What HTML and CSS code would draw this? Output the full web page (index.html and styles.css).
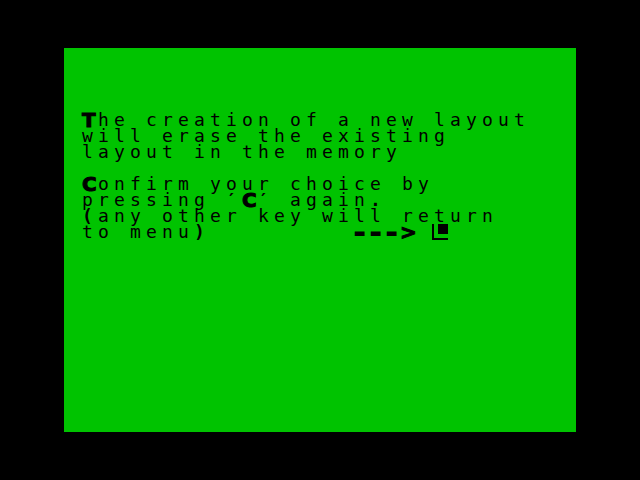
FILE: index.html
```html
<!DOCTYPE html>
<html lang="en">
<head>
<meta charset="utf-8">
<title>New layout</title>
<link rel="stylesheet" href="styles.css">
</head>
<body>
<main class="screen">
<section class="message">
<p class="line">The creation of a new layout</p>
<p class="line">will erase the existing</p>
<p class="line">layout in the memory</p>
</section>
<section class="message">
<p class="line">Confirm your choice by</p>
<p class="line">pressing ′C′ again.</p>
<p class="line">(any other key will return</p>
<p class="line">to menu)         ---&gt; <svg class="cursor" viewBox="0 0 16 16" shape-rendering="crispEdges" aria-hidden="true"><path d="M0 0H2V14H16V16H0ZM6 0H16V10H6Z"/></svg></p>
</section>
</main>
<script src="cells.js"></script>
</body>
</html>
```
FILE: styles.css
```css
* {
  box-sizing: border-box;
}

body {
  margin: 0;
  min-height: 100vh;
  padding: 10vh 10vw;
  display: flex;
  background: #000;
  color: #000;
  font-family: "DejaVu Sans Mono", monospace;
  font-size: 18px;
  line-height: 16px;
}

.screen {
  flex: 1;
  display: flex;
  flex-direction: column;
  gap: 16px;
  padding: 64px 16px;
  background: #00c300;
}

.line {
  margin: 0;
  display: flex;
  height: 16px;
  white-space: pre;
}

/* One character cell of the display */
.cell {
  flex: none;
  width: 16px;
  padding-left: 2px;
}

.capital {
  font-family: "DejaVu Sans", sans-serif;
  font-size: 20px;
  font-weight: bold;
  -webkit-text-stroke: 1px #000;
}

.bold {
  font-weight: bold;
}

.arrow {
  padding-left: 0;
  font-family: "DejaVu Sans", sans-serif;
  font-size: 20px;
  font-weight: bold;
  -webkit-text-stroke: 1px #000;
}

.dash {
  padding-left: 1px;
  font-family: "DejaVu Sans", sans-serif;
  font-size: 32px;
  font-weight: bold;
}

.quote {
  font-weight: bold;
}

.cursor {
  flex: none;
  width: 16px;
  height: 16px;
}
```
FILE: cells.js
```js
// Places every character of a line in its own display cell.
function cellClass(ch) {
  if (/[A-Z]/.test(ch)) return "cell capital";
  if (ch === "-") return "cell dash";
  if (ch === ">") return "cell arrow";
  if (ch === "′") return "cell quote";
  if (/[().]/.test(ch)) return "cell bold";
  return "cell";
}

document.querySelectorAll(".line").forEach(function (line) {
  const text = line.firstChild;
  const cells = document.createDocumentFragment();
  for (const ch of text.data) {
    const cell = document.createElement("span");
    cell.className = cellClass(ch);
    cell.textContent = ch;
    cells.append(cell);
  }
  text.replaceWith(cells);
});
```
